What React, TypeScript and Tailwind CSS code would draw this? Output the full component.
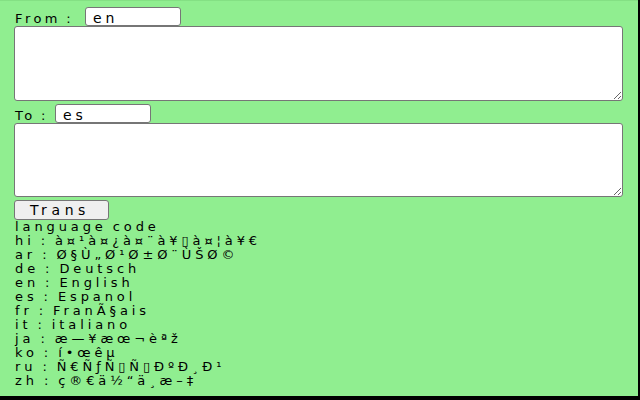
import React from "react";

const langs = [
  "hi : à¤¹à¤¿à¤¨à¥▯à¤¦à¥€",
  "ar : Ø§Ù„Ø¹Ø±Ø¨ÙŠØ©",
  "de : Deutsch",
  "en : English",
  "es : Espanol",
  "fr : FranÃ§ais",
  "it : italiano",
  "ja : æ—¥æœ¬èªž",
  "ko : í•œêµ",
  "ru : Ñ€ÑƒÑ▯Ñ▯ÐºÐ¸Ð¹",
  "zh : ç®€ä½“ä¸­æ–‡",
];

export default function App() {
  return (
    <div className="w-[640px] h-[400px] bg-black overflow-hidden font-['DejaVu_Sans',sans-serif] text-black">
      <div className="w-[638px] h-[396px] bg-[#90ee90] border-t border-[#84e084] flex flex-col items-start pl-[14px] pt-[6px]">
        <div className="flex items-baseline">
          <span className="w-[71px] pl-[1px] text-[13px] leading-[14px] tracking-[3.4px] [word-spacing:-2px]">From :</span>
          <input
            defaultValue="en"
            className="w-[96px] h-[19px] bg-white border border-[#767676] rounded-[3px] pl-[7px] pt-[3px] pb-0 text-[14px] leading-[14px] tracking-[4px] outline-none"
          />
        </div>
        <textarea className="block w-[609px] h-[75px] bg-white border border-[#767676] rounded-[3px]" />
        <div className="flex items-baseline mt-[3px]">
          <span className="w-[41px] pl-[1px] text-[13px] leading-[14px] tracking-[3.4px] [word-spacing:-2px]">To :</span>
          <input
            defaultValue="es"
            className="w-[96px] h-[19px] bg-white border border-[#767676] rounded-[3px] pl-[7px] pt-[3px] pb-0 text-[14px] leading-[14px] tracking-[4px] outline-none"
          />
        </div>
        <textarea className="block w-[609px] h-[74px] bg-white border border-[#767676] rounded-[3px]" />
        <button className="mt-[3px] w-[95px] h-[20px] bg-[#efefef] border border-[#767676] rounded-[3px] pl-[15px] text-left text-[14px] leading-[16px] tracking-[4.6px]">
          Trans
        </button>
        <div className="text-[13px] leading-[14px] tracking-[3.9px] [word-spacing:-2px] pl-[1px]">
          <div>language code</div>
          {langs.map((l) => (
            <div key={l} className="whitespace-nowrap">{l}</div>
          ))}
        </div>
      </div>
    </div>
  );
}
